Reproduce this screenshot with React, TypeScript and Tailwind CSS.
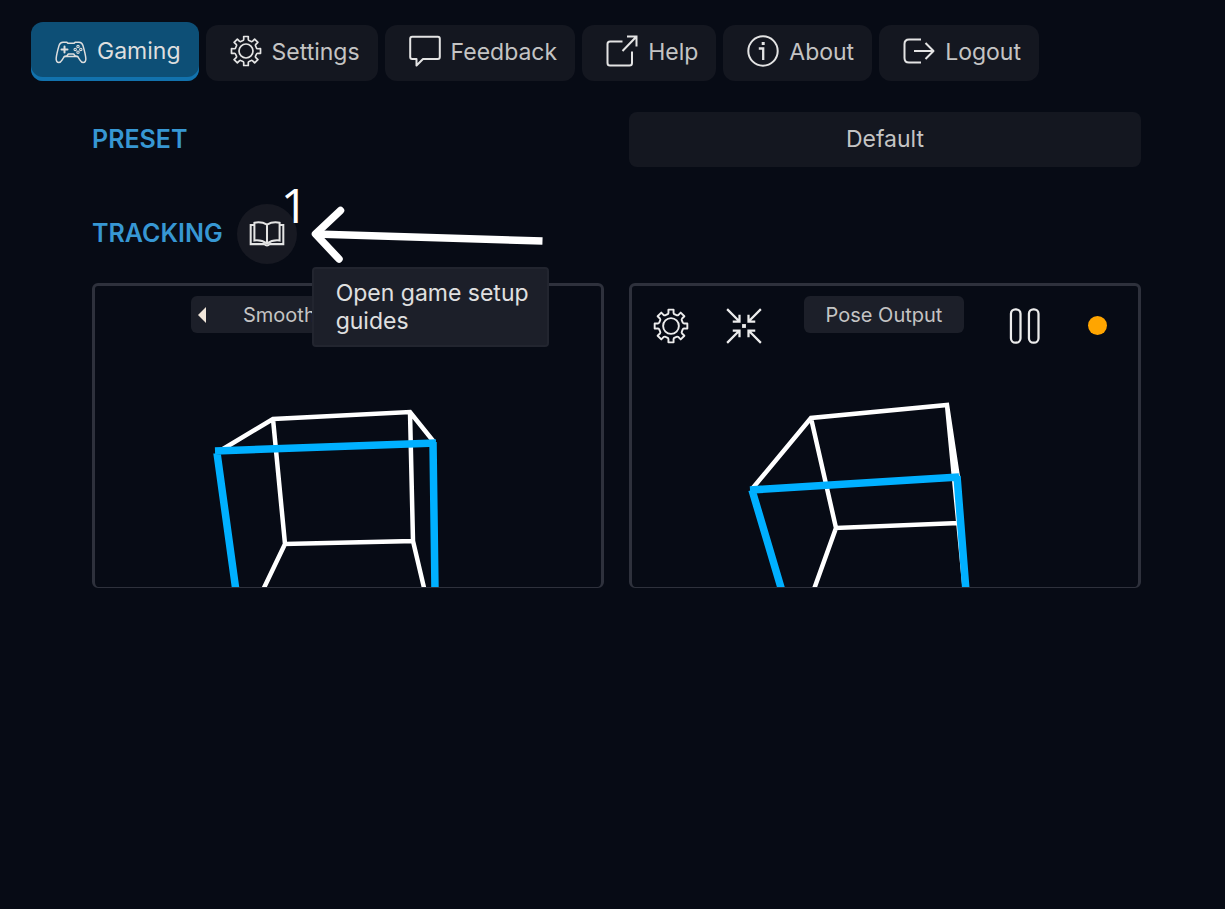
import type { ReactNode } from "react";

function gearPath(cx: number, cy: number, outer: number, inner: number) {
  const at = (r: number, deg: number) => {
    const a = ((deg - 90) * Math.PI) / 180;
    return `${(cx + r * Math.cos(a)).toFixed(2)} ${(cy + r * Math.sin(a)).toFixed(2)}`;
  };
  let d = "";
  for (let i = 0; i < 8; i++) {
    const t = i * 45;
    d += `${i === 0 ? "M" : "L"}${at(outer, t - 9)}L${at(outer, t + 9)}L${at(inner + 1, t + 11)}`;
    d += `Q${at(inner, t + 13)} ${at(inner, t + 16)}L${at(inner, t + 29)}Q${at(inner, t + 32)} ${at(inner + 1, t + 34)}`;
  }
  return d + "Z";
}

const gear = gearPath(16, 16, 14.7, 10.9);

function Icon({ children, className = "size-8" }: { children: ReactNode; className?: string }) {
  return (
    <svg
      viewBox="0 0 32 32"
      className={`${className} shrink-0`}
      fill="none"
      stroke="currentColor"
      strokeWidth="2"
      strokeLinecap="round"
      strokeLinejoin="round"
      aria-hidden="true"
    >
      {children}
    </svg>
  );
}

const GearIcon = ({ className }: { className?: string }) => (
  <Icon className={className}>
    <path d={gear} strokeWidth="1.7" />
    <circle cx="16" cy="16" r="7" strokeWidth="1.7" />
  </Icon>
);

const GamepadIcon = () => (
  <Icon>
    <g strokeWidth="1.5">
      <path d="M8 6.2h3.6l1.2 1h6.4l1.200-1H24c2.300 0 3.400 1.300 4 3.400 1.200 4.200 2.500 8.800 2.800 12.600.3 3-1 4.300-2.600 4.300-1.500 0-2.300-.9-3.200-2.400l-2.400-3.700H9.400L7 24.100c-.9 1.500-1.700 2.400-3.200 2.400-1.600 0-2.900-1.300-2.600-4.300C1.500 18.400 2.800 13.800 4 9.600c.6-2.100 1.700-3.400 4-3.400Z" />
      <path d="M9.400 20.400c1.800 0 3.400-1 3.800-2.400h5.600c.4 1.400 2 2.400 3.800 2.400" />
      <path d="M9.500 10.500v6M6.500 13.500h6" strokeWidth="2" />
      <circle cx="23" cy="10.600" r="1.200" strokeWidth="1.100" />
      <circle cx="23" cy="16.200" r="1.200" strokeWidth="1.100" />
      <circle cx="20.200" cy="13.400" r="1.200" strokeWidth="1.100" />
      <circle cx="25.800" cy="13.400" r="1.200" strokeWidth="1.100" />
    </g>
  </Icon>
);

const FeedbackIcon = () => (
  <Icon>
    <path d="M3.200 1.800h25.600q2 0 2 2v18.200q0 2-2 2H14L7.500 30.500V24H3.200q-2 0-2-2V3.800q0-2 2-2Z" />
  </Icon>
);

const HelpIcon = () => (
  <Icon>
    <path
      d="M16.500 6.500H4Q1.500 6.500 1.500 9V28Q1.500 30.500 4 30.500H23.500Q26 30.500 26 28V16.500M16.500 16 30 2M21 1.500H30.500V11.500"
      strokeLinecap="butt"
      strokeLinejoin="miter"
    />
  </Icon>
);

const AboutIcon = () => (
  <Icon>
    <circle cx="16" cy="16" r="14.700" />
    <path d="M11.800 13.500H16.200V25" strokeLinecap="butt" strokeLinejoin="miter" strokeWidth="2.300" />
    <rect x="14.700" y="7" width="3" height="3" fill="currentColor" stroke="none" />
  </Icon>
);

const LogoutIcon = () => (
  <Icon>
    <path
      d="M18 4.500H6Q1.500 4.500 1.500 9V23Q1.500 27.500 6 27.500H18M11 16H31M22.500 8 30.500 16 22.500 24"
      strokeLinecap="butt"
    />
  </Icon>
);

const BookIcon = () => (
  <Icon className="size-9">
    <g strokeLinecap="butt" strokeLinejoin="miter" strokeWidth="1.800">
      <path d="M4.500 8H1.500V25H13.500Q16 27.500 18.500 25H30.500V8H27.500" />
      <path d="M16 7.600Q11 4.800 4.800 6V21.800Q11 21 16 24.500Q21 21 27.200 21.800V6Q21 4.800 16 7.600V25" />
    </g>
  </Icon>
);

const RecenterIcon = () => (
  <Icon className="size-9">
    <path
      d="M1 1 11.500 11.500M12 6V12H6M31 1 20.500 11.500M20 6V12H26M1 31 11.500 20.500M12 26V20H6M31 31 20.500 20.500M20 26V20H26"
      strokeLinecap="butt"
      strokeLinejoin="miter"
    />
    <rect x="14.300" y="14.300" width="3.400" height="3.400" fill="currentColor" stroke="none" />
  </Icon>
);

const PauseIcon = () => (
  <Icon className="size-9">
    <rect x="3.500" y="1.200" width="8.500" height="29.600" rx="4" />
    <rect x="19.500" y="1.200" width="8.500" height="29.600" rx="4" />
  </Icon>
);

const navItems = [
  { label: "Settings", icon: <GearIcon /> },
  { label: "Feedback", icon: <FeedbackIcon /> },
  { label: "Help", icon: <HelpIcon /> },
  { label: "About", icon: <AboutIcon /> },
  { label: "Logout", icon: <LogoutIcon /> },
];

function Panel({ white, blue, children }: { white: string; blue: string; children: ReactNode }) {
  return (
    <section className="grid h-[305px] overflow-hidden rounded-md border-3 border-b border-[#2e313c]">
      <svg viewBox="1 0 506 301" className="col-start-1 row-start-1 h-[301px] w-full" fill="none" aria-hidden="true">
        <path d={white} stroke="#ffffff" strokeWidth="4.500" />
        <path d={blue} stroke="#00b0ff" strokeWidth="7.500" />
      </svg>
      <div className="col-start-1 row-start-1">{children}</div>
    </section>
  );
}

export default function App() {
  return (
    <div className="min-h-screen bg-[#070b15] pb-8 font-['Inter',sans-serif] text-[23px] text-[#c4c4c4]">
      <nav className="flex items-end gap-[7px] px-[31px] pt-[22px]">
        <button className="flex h-[59px] items-center gap-[10px] rounded-xl bg-[#0d4f76] pr-[18px] pl-6 text-[#dedede] shadow-[inset_0_-4px_0_#1272ad]">
          <GamepadIcon />
          Gaming
        </button>
        {navItems.map((item) => (
          <button
            key={item.label}
            className="flex h-14 items-center gap-[10px] rounded-xl bg-[#141720] pr-[18px] pb-[2px] pl-6"
          >
            <span className="pb-[2px] text-[#e4e4e4]">{item.icon}</span>
            {item.label}
          </button>
        ))}
      </nav>

      <main className="pt-[31px] pr-[84px] pl-[92px]">
        <div className="grid grid-cols-2 items-center gap-[25px]">
          <h2 className="text-[25px] font-semibold text-[#3797d3]">PRESET</h2>
          <button className="h-[55px] rounded-lg bg-[#141720]">Default</button>
        </div>

        <div className="mt-[37px] flex items-center gap-[14px]">
          <h2 className="text-[25px] font-semibold text-[#3797d3]">TRACKING</h2>
          <div className="relative">
            <button
              aria-label="Open game setup guides"
              aria-describedby="guide-tip"
              className="flex size-[60px] items-center justify-center rounded-full bg-[#171922] text-[#e4e4e4]"
            >
              <BookIcon />
            </button>
            <span className="absolute -top-[26px] left-11 font-['Open_Sans',sans-serif] text-5xl leading-[54px] text-white">
              1
            </span>
            <svg
              viewBox="0 0 236 60"
              className="absolute top-0 left-[74px] h-[60px] w-[236px]"
              fill="none"
              stroke="#ffffff"
              strokeWidth="7.500"
              aria-hidden="true"
            >
              <path d="M4 30 231.500 37" />
              <path d="M29.500 6.500 4.500 30 28 55" strokeLinecap="round" strokeLinejoin="round" />
            </svg>
            <div
              id="guide-tip"
              role="tooltip"
              className="absolute top-[63px] left-[75px] z-10 w-[237px] rounded-sm border-2 border-[#22252f] bg-[#1c1f29] py-[10px] pr-3 pl-[22px] leading-7 text-[#e0e0e0]"
            >
              Open game setup guides
            </div>
          </div>
        </div>

        <div className="mt-[19px] grid grid-cols-2 gap-[25px]">
          <Panel
            white="M124 166 179 133 316 126 340 156M179 133 191 258 319 255 316 126M191 258 168 306M319 255 331 306"
            blue="M142 305 123 167M121 165 342 157M339 156 341 305"
          >
            <div className="mx-auto mt-[10px] flex h-[37px] w-[314px] items-center rounded-md bg-[#1c1f29] text-xl">
              <button aria-label="Previous view" className="flex h-full w-[52px] items-center pl-[7px] text-[#f0e6da]">
                <svg viewBox="0 0 8 16" className="h-4 w-2" fill="currentColor" aria-hidden="true">
                  <path d="M8 0V16L0 8Z" />
                </svg>
              </button>
              Smooth
            </div>
          </Panel>
          <Panel
            white="M121 203 180 132 316 119 327 192M180 132 205 242 328 237M316 119 334 306M205 242 182 306"
            blue="M151 305 121 204M119 204 328 191M326 190 335 305"
          >
            <div className="grid grid-cols-[73px_73px_1fr_73px_73px] pt-[3px] pr-1 pl-[2px] text-[#ececec]">
              <button aria-label="Output settings" className="flex h-[73px] items-center justify-center">
                <GearIcon className="size-9" />
              </button>
              <button aria-label="Recenter" className="flex h-[73px] items-center justify-center">
                <RecenterIcon />
              </button>
              <div className="mx-auto mt-[7px] flex h-[37px] w-[160px] items-center justify-center rounded-md bg-[#1c1f29] text-xl text-[#c4c4c4]">
                Pose Output
              </div>
              <button aria-label="Pause" className="flex h-[73px] items-center justify-center">
                <PauseIcon />
              </button>
              <div className="flex h-[73px] items-center justify-center">
                <span className="size-[19px] rounded-full bg-[#ffa500]" />
              </div>
            </div>
          </Panel>
        </div>
      </main>
    </div>
  );
}
